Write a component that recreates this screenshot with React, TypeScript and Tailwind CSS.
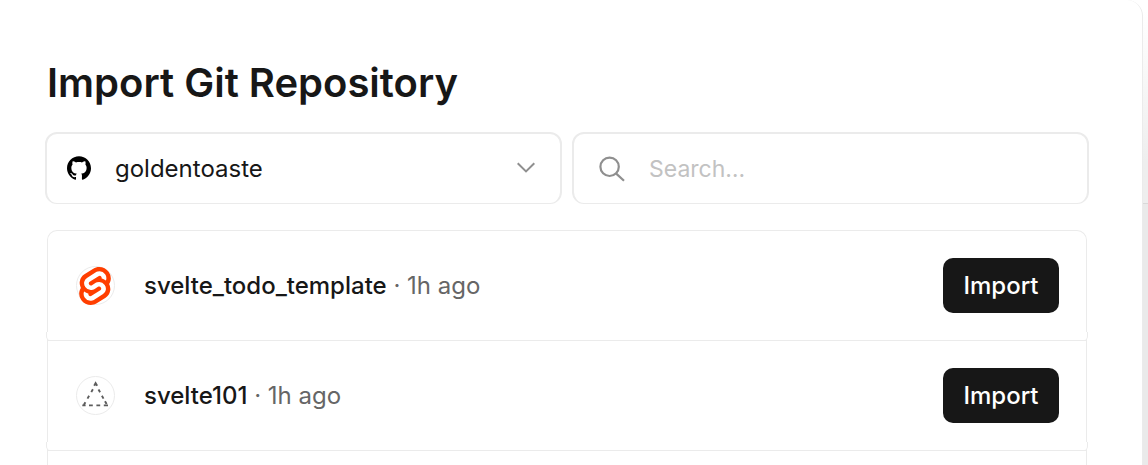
import { SiGithub, SiSvelte } from "react-icons/si";

type Repo = { name: string; age: string; framework: "svelte" | "none" };

const repos: Repo[] = [
  { name: "svelte_todo_template", age: "1h ago", framework: "svelte" },
  { name: "svelte101", age: "1h ago", framework: "none" },
];

function RepoIcon({ framework }: { framework: Repo["framework"] }) {
  return (
    <span className="flex size-[39px] shrink-0 items-center justify-center rounded-full border border-[#ebebeb]">
      {framework === "svelte" ? (
        <SiSvelte className="mr-px size-[38px] shrink-0 text-[#ff3e00]" aria-hidden="true" />
      ) : (
        <svg viewBox="0 0 39 39" className="size-[39px] shrink-0" fill="none" aria-hidden="true">
          <g stroke="#5c5c5c" strokeWidth="1.9">
            <path d="M18.2 9.8 19.6 7.2 21.2 9.8" />
            <path d="M16.9 13.3 15.3 16.1M13.1 19.8 11.5 22.6M9.4 26.2 7.8 29" />
            <path d="M22.5 13.5 24.1 16.3M25.9 19.8 27.5 22.6M29 25.2 30.6 28" />
            <path d="M6.3 29.4H9.6M13 29.4H16.8M20.4 29.4H24.2M27.8 29.4H32" />
          </g>
        </svg>
      )}
    </span>
  );
}

function RepoRow({ repo }: { repo: Repo }) {
  return (
    <li className="relative flex h-[110px] items-center border-b border-[#ebebeb] pr-[27px] pl-7 after:absolute after:-inset-x-[2px] after:bottom-0 after:h-2 after:rounded-b-sm after:border-x after:border-[#ebebeb] after:bg-white">
      <RepoIcon framework={repo.framework} />
      <p className="ml-[29px] flex-1 text-[24px] leading-8 text-[#666]">
        <span className="font-medium text-[#171717]">{repo.name}</span> · {repo.age}
      </p>
      <button
        type="button"
        className="h-[55px] w-[116px] rounded-[10px] bg-[#171717] text-[24px] font-medium text-white"
      >
        Import
      </button>
    </li>
  );
}

export default function App() {
  return (
    <div className="flex h-screen overflow-hidden bg-white font-['Inter',sans-serif] text-[#171717]">
      <main className="relative z-10 flex-1 rounded-tr-2xl border-r border-[#ebebeb] bg-white pt-[58px] pr-[53px] pl-[45px]">
        <h1 className="pl-[2px] text-[40px] leading-[50px] font-semibold">Import Git Repository</h1>
        <div className="mt-6 grid grid-cols-2 gap-[10px]">
          <div className="relative h-[72px]">
            <SiGithub className="absolute top-6 left-[22px] size-6 text-black" aria-hidden="true" />
            <select
              aria-label="Git account"
              className="size-full appearance-none rounded-xl border-2 border-b border-[#ebebeb] bg-transparent pr-14 pl-[68px] text-[24px] outline-none"
            >
              <option>goldentoaste</option>
            </select>
            <svg
              viewBox="0 0 18 12"
              className="pointer-events-none absolute top-[30px] right-[27px] h-3 w-[18px]"
              fill="none"
              aria-hidden="true"
            >
              <path d="M.7 1.2 9 9.4 17.3 1.2" stroke="#8f8f8f" strokeWidth="2" />
            </svg>
          </div>
          <div className="relative h-[72px]">
            <svg
              viewBox="0 0 26 26"
              className="absolute top-6 left-[27px] size-[26px]"
              fill="none"
              stroke="#8f8f8f"
              strokeWidth="2.2"
              aria-hidden="true"
            >
              <circle cx="10.6" cy="10.8" r="9.2" />
              <path d="m17.2 17.6 7.8 7.2" />
            </svg>
            <input
              type="search"
              aria-label="Search repositories"
              placeholder="Search…"
              className="size-full appearance-none rounded-xl border-2 border-b border-[#ebebeb] bg-transparent pr-4 pl-[75px] text-[23px] outline-none placeholder:text-[#c2c2c2]"
            />
          </div>
        </div>
        <ul className="mt-[26px] mr-[2px] ml-[2px] rounded-t-[10px] border-x border-t border-[#ebebeb]">
          {repos.map((repo) => (
            <RepoRow key={repo.name} repo={repo} />
          ))}
          <li className="h-[110px]" />
        </ul>
      </main>
      <aside className="-ml-4 flex w-[21px] flex-col bg-[#eaeaea]">
        <div className="h-[204px] border-b border-[#d9d9d9] bg-linear-to-b from-white from-5% to-[#eeeeee] to-80%" />
      </aside>
    </div>
  );
}
